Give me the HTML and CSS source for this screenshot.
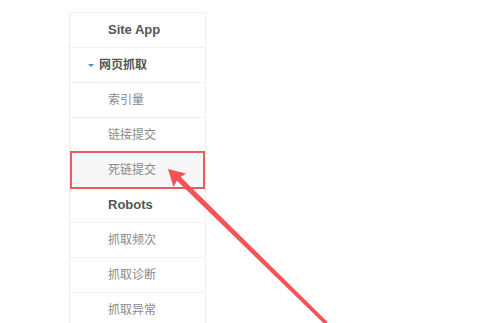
FILE: index.html
```html
<!DOCTYPE html>
<html lang="zh">
<head>
<meta charset="utf-8">
<title>Site App</title>
<link rel="stylesheet" href="styles.css">
</head>
<body>
<nav class="panel">
  <div class="row head">Site App</div>
  <div class="row group"><span class="caret"></span>网页抓取</div>
  <div class="row item">索引量</div>
  <div class="row item">链接提交</div>
  <div class="row item active">死链提交</div>
  <div class="row head">Robots</div>
  <div class="row item">抓取频次</div>
  <div class="row item">抓取诊断</div>
  <div class="row item">抓取异常</div>
</nav>
<svg class="arrow" width="482" height="323" viewBox="0 0 482 323" xmlns="http://www.w3.org/2000/svg">
  <polygon points="168,169 186,173.5 180.8,177 327.6,322 325,324.6 177,180.8 173.5,187" fill="#f25457"/>
</svg>
</body>
</html>
```

FILE: styles.css
```css
html, body {
  margin: 0;
  padding: 0;
  background: #ffffff;
}

body {
  width: 482px;
  height: 323px;
  overflow: hidden;
  position: relative;
  font-family: "Liberation Sans", "Noto Sans CJK SC", sans-serif;
}

.panel {
  margin: 12px 0 0 69px;
  width: 137px;
  box-sizing: border-box;
  border: 1px solid #efefef;
  background: #ffffff;
}

.row {
  height: 34px;
  line-height: 34px;
  border-bottom: 1px solid #f0f0f0;
  padding-left: 38px;
  font-size: 12px;
  color: #8a8a8a;
  position: relative;
  white-space: nowrap;
}

.head {
  font-size: 13px;
  font-weight: bold;
  color: #555555;
}

.group {
  padding-left: 18px;
  color: #555555;
  font-weight: bold;
  display: flex;
  align-items: center;
  gap: 5px;
}

.caret {
  width: 0;
  height: 0;
  border-left: 3px solid transparent;
  border-right: 3px solid transparent;
  border-top: 3.5px solid #4a8fe0;
}

.active {
  background: #f7f7f7;
}

.active::after {
  content: "";
  position: absolute;
  left: 0;
  right: 0;
  top: -2px;
  height: 38px;
  box-sizing: border-box;
  border: 2px solid #f05a5c;
}

.arrow {
  position: absolute;
  left: 0;
  top: 0;
  pointer-events: none;
}
```
